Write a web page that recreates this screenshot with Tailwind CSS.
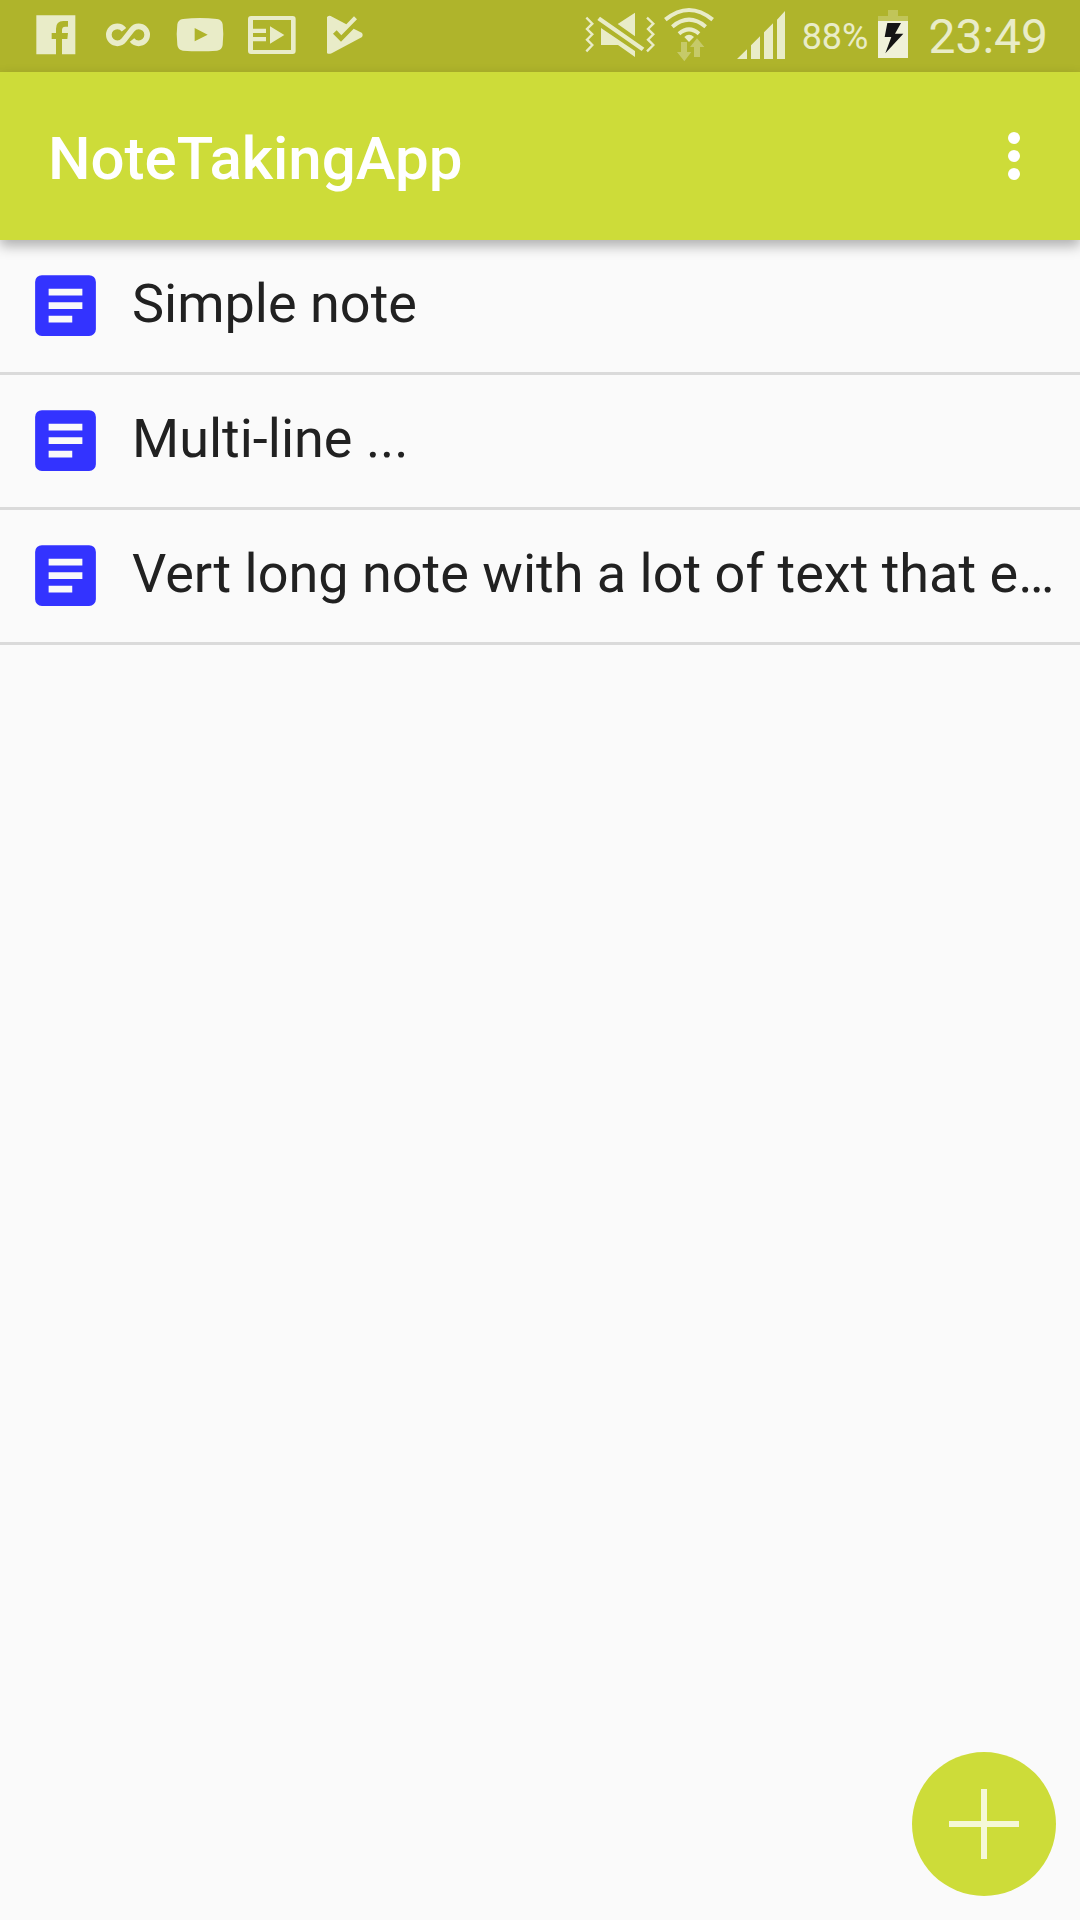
<!DOCTYPE html>
<html lang="en">
<head>
<meta charset="utf-8">
<meta name="viewport" content="width=device-width, initial-scale=1">
<title>NoteTakingApp</title>
<script src="https://cdn.jsdelivr.net/npm/@tailwindcss/browser@4"></script>
</head>
<body class="flex min-h-screen flex-col bg-[#fafafa] font-['Roboto',sans-serif] text-[#212121]">

<!-- System status bar -->
<div class="flex h-[72px] items-center justify-between bg-[#afb42b] px-8 text-[#e9ecc8]">
  <div class="flex items-center gap-6">
    <svg class="size-12" viewBox="36 36 144 144" fill="currentColor" aria-hidden="true"><path d="M49 46H166V163H126V117H142L144 99H126V90Q126 80 136 80H144V63H130Q108 63 108 86V99H95V117H108V163H49Z"/></svg>
    <svg class="size-12" viewBox="252 36 144 144" fill="none" stroke="currentColor" stroke-width="17" aria-hidden="true"><path d="M312 89Q304 79 292 79A25 25 0 0 0 292 130Q304 130 312 120L336 89Q344 79 356 79A25 25 0 0 1 356 130Q344 130 336 120"/></svg>
    <svg class="size-12" viewBox="48 36 144 144" fill="currentColor" fill-rule="evenodd" aria-hidden="true"><path d="M69 57Q120 51 171 57Q186 59 188 73Q192 103 188 135Q186 150 171 152Q120 156 69 152Q54 150 52 135Q48 103 52 73Q54 59 69 57ZM104 84V124L143 104Z"/></svg>
    <svg class="size-12" viewBox="264 36 144 144" fill="currentColor" fill-rule="evenodd" aria-hidden="true"><path d="M273 48H398Q407 48 407 57V153Q407 162 398 162H273Q264 162 264 153V57Q264 48 273 48ZM279 60V86H318V99H279V111H318V124H279V150H393V60ZM330 79V131L373 105Z"/></svg>
    <svg class="size-12" viewBox="480 36 144 144" fill="currentColor" aria-hidden="true"><path d="M501 52Q503 46 512 48L559 73L582 49L591 58L544 106L530 91L519 101L543 125L581 86L605 98Q611 104 605 112L515 160Q503 164 501 158Z"/></svg>
  </div>
  <div class="flex items-center">
    <svg class="h-[72px] w-[72px]" viewBox="42 0 216 216" fill="currentColor" aria-label="Muted, vibrate" role="img">
      <path d="M49 53L67 71L51 87L67 103L51 119L67 135L49 154M231 53L250 71L234 87L250 103L234 119L250 135L231 154" fill="none" stroke="currentColor" stroke-width="7"/>
      <path d="M90 50L223 143L215 153L82 60ZM195 38V109L143 72ZM93 84L195 153V171L144 135H93Z"/>
    </svg>
    <svg class="ml-1 h-[72px] w-[56px]" viewBox="270 0 168 216" fill="currentColor" aria-label="Wi-Fi" role="img">
      <path d="M286 59Q357 1 428 59M307 80Q357 38 407 80M327 101Q357 75 387 101" fill="none" stroke="currentColor" stroke-width="12"/>
      <path d="M343 111Q357 98 372 111L357 126Z"/>
      <path class="opacity-40" d="M333 126H351V156H364L343 184L321 156H333ZM381 115L403 141H390V171H372V141H360Z"/>
    </svg>
    <svg class="ml-5 h-[72px] w-[50px]" viewBox="498 0 150 216" fill="currentColor" aria-label="Signal" role="img"><path d="M501 177L531 148V177ZM543 136L570 109V177H543ZM582 97L609 70V177H582ZM621 59L645 33V177H621Z"/></svg>
    <span class="ml-4 pt-0.5 text-4xl">88%</span>
    <svg class="ml-2.5 h-[72px] w-[30px]" viewBox="267 0 90 216" aria-label="Charging" role="img">
      <path fill="#c1c559" d="M297 30H327V48H357V63H267V48H297Z"/>
      <path fill="#f0f1d9" d="M267 63H357V174H267Z"/>
      <path fill="#141414" d="M295 69H336L318 101H343L289 160L307 111H287Z"/>
    </svg>
    <time class="ml-5 pt-0.5 text-5xl">23:49</time>
  </div>
</div>

<!-- App bar -->
<header class="relative flex h-[168px] items-center justify-between bg-[#cddc39] pr-[42px] pl-12 text-white shadow-[0_6px_12px_rgba(0,0,0,0.3)]">
  <h1 class="pt-1.5 text-6xl font-medium">NoteTakingApp</h1>
  <button type="button" aria-label="More options" class="flex w-12 flex-col items-center gap-1.5 py-4">
    <span class="size-3 rounded-full bg-white"></span>
    <span class="size-3 rounded-full bg-white"></span>
    <span class="size-3 rounded-full bg-white"></span>
  </button>
</header>

<main class="grow">
  <ul>
    <li class="border-b-3 border-[#dadada]">
      <a href="#simple" class="flex h-[132px] items-center gap-[26px] pr-6 pb-px pl-[25px]">
        <svg class="size-[81px] shrink-0" viewBox="0 0 24 24" fill="#3333ff" aria-hidden="true"><path d="M19 3H5a2 2 0 0 0-2 2v14a2 2 0 0 0 2 2h14a2 2 0 0 0 2-2V5a2 2 0 0 0-2-2zm-5 14H7v-2h7v2zm3-4H7v-2h10v2zm0-4H7V7h10v2z"/></svg>
        <span class="truncate pb-1 text-[54px] leading-[64px]">Simple note</span>
      </a>
    </li>
    <li class="border-b-3 border-[#dadada]">
      <a href="#multi-line" class="flex h-[132px] items-center gap-[26px] pr-6 pb-px pl-[25px]">
        <svg class="size-[81px] shrink-0" viewBox="0 0 24 24" fill="#3333ff" aria-hidden="true"><path d="M19 3H5a2 2 0 0 0-2 2v14a2 2 0 0 0 2 2h14a2 2 0 0 0 2-2V5a2 2 0 0 0-2-2zm-5 14H7v-2h7v2zm3-4H7v-2h10v2zm0-4H7V7h10v2z"/></svg>
        <span class="truncate pb-1 text-[54px] leading-[64px]">Multi-line ...</span>
      </a>
    </li>
    <li class="border-b-3 border-[#dadada]">
      <a href="#long" class="flex h-[132px] items-center gap-[26px] pr-6 pb-px pl-[25px]">
        <svg class="size-[81px] shrink-0" viewBox="0 0 24 24" fill="#3333ff" aria-hidden="true"><path d="M19 3H5a2 2 0 0 0-2 2v14a2 2 0 0 0 2 2h14a2 2 0 0 0 2-2V5a2 2 0 0 0-2-2zm-5 14H7v-2h7v2zm3-4H7v-2h10v2zm0-4H7V7h10v2z"/></svg>
        <span class="truncate pb-1 text-[54px] leading-[64px]">Vert long note with a lot of text that e…</span>
      </a>
    </li>
  </ul>
</main>

<!-- Floating add button -->
<button type="button" aria-label="Add note" class="fixed right-6 bottom-6 flex size-36 items-center justify-center rounded-full bg-[#cddc39]">
  <svg class="size-[70px]" viewBox="0 0 70 70" fill="#f5f8d7" aria-hidden="true"><path d="M32 0h6v32h32v6H38v32h-6V38H0v-6h32z"/></svg>
</button>

</body>
</html>
